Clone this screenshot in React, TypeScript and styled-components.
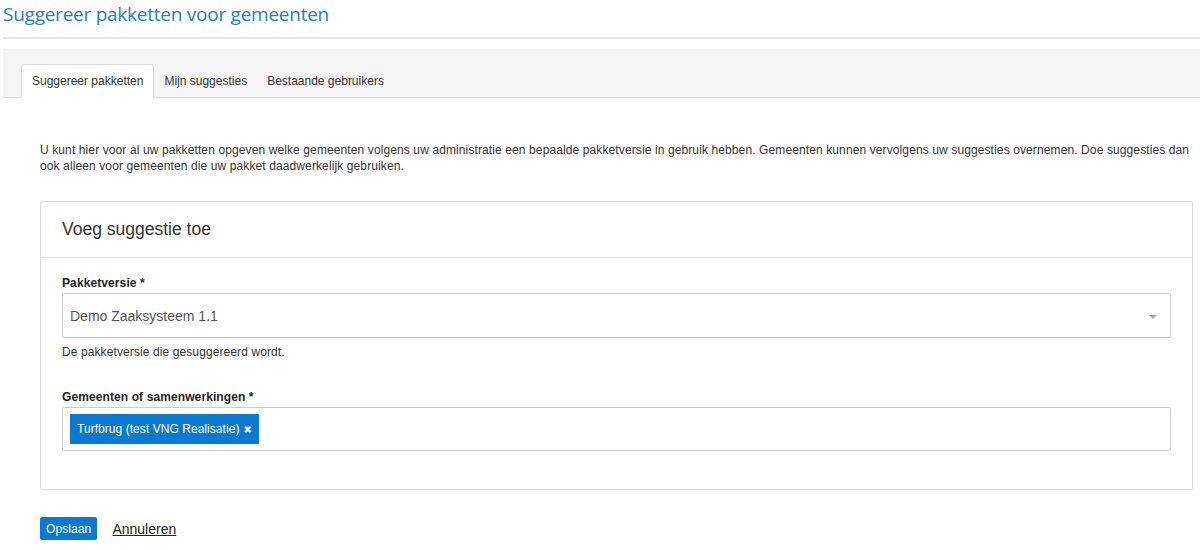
import styled, { createGlobalStyle } from "styled-components";

const GlobalStyle = createGlobalStyle`
  body {
    margin: 0;
    background: #ffffff;
    color: #333333;
    font-family: "Liberation Sans", Arial, sans-serif;
  }
`;

const Page = styled.div`
  width: 1200px;
  padding-left: 3px;
  box-sizing: border-box;
`;

const TitleBar = styled.div`
  border-bottom: 2px solid #e6e6e6;
  padding-bottom: 8px;
  margin-bottom: 10px;
`;

const Title = styled.h1`
  margin: 0;
  font-family: "Open Sans", "Liberation Sans", sans-serif;
  font-weight: 400;
  font-size: 19px;
  letter-spacing: -0.25px;
  line-height: 29px;
  color: #2a7fc4;
`;

const TabBar = styled.div`
  display: flex;
  align-items: flex-end;
  background: #f5f5f5;
  padding: 15px 0 0 18px;
  border-bottom: 1px solid #dddddd;
  height: 49px;
  box-sizing: border-box;
`;

const Tab = styled.div<{ $active?: boolean }>`
  height: 34px;
  box-sizing: border-box;
  display: flex;
  align-items: center;
  padding: ${(p) => (p.$active ? "0 10px 1px" : "0 9px 1px")};
  font-size: 12px;
  color: #333333;
  border: 1px solid ${(p) => (p.$active ? "#dddddd" : "transparent")};
  border-bottom: none;
  border-radius: 3px 3px 0 0;
  background: ${(p) => (p.$active ? "#ffffff" : "transparent")};
  margin-bottom: -1px;
`;

const Content = styled.div`
  padding: 44px 7px 0 37px;
`;

const Intro = styled.p`
  margin: 0 -7px 27px 0;
  font-size: 12px;
  letter-spacing: 0.11px;
  line-height: 16px;
  color: #333333;
`;

const Panel = styled.section`
  border: 1px solid #dddddd;
  border-radius: 2px;
`;

const PanelHeader = styled.div`
  height: 55px;
  display: flex;
  align-items: center;
  padding: 0 21px;
  border-bottom: 1px solid #e6e6e6;
  font-size: 17.5px;
  color: #333333;
`;

const PanelBody = styled.div`
  padding: 18px 21px 38px;
`;

const Field = styled.div`
  & + & {
    margin-top: 31px;
  }
`;

const Label = styled.label`
  display: block;
  font-size: 12px;
  letter-spacing: 0.1px;
  font-weight: 700;
  line-height: 14px;
  color: #222222;
  margin-bottom: 3px;
`;

const SelectBox = styled.div`
  height: 45px;
  box-sizing: border-box;
  border: 1px solid #cccccc;
  border-radius: 2px;
  display: flex;
  align-items: center;
  justify-content: space-between;
  padding: 0 13px 0 7px;
  font-size: 14px;
  color: #555555;
`;

const Caret = styled.span`
  width: 0;
  height: 0;
  border-left: 4px solid transparent;
  border-right: 4px solid transparent;
  border-top: 4px solid #aaaaaa;
  margin-top: 2px;
`;

const Help = styled.div`
  font-size: 12px;
  letter-spacing: 0.1px;
  line-height: 14px;
  color: #333333;
  margin-top: 7px;
`;

const MultiBox = styled.div`
  height: 44px;
  box-sizing: border-box;
  border: 1px solid #cccccc;
  border-radius: 2px;
  display: flex;
  align-items: center;
  padding: 0 7px;
`;

const Chip = styled.span`
  display: inline-flex;
  align-items: center;
  gap: 4px;
  height: 30px;
  padding: 0 7px;
  background: #0a7ad0;
  color: #ffffff;
  font-size: 12px;
  letter-spacing: 0.05px;
  border-radius: 1px;
`;

const ChipX = styled.span`
  font-family: "DejaVu Sans", sans-serif;
  font-size: 10px;
`;

const Actions = styled.div`
  display: flex;
  align-items: center;
  gap: 15px;
  margin-top: 27px;
`;

const PrimaryButton = styled.button`
  height: 23px;
  padding: 0 6px;
  border: none;
  border-radius: 2px;
  background: #0a7ad0;
  color: #ffffff;
  font-family: "Liberation Sans", Arial, sans-serif;
  font-size: 12px;
  letter-spacing: 0.1px;
`;

const LinkButton = styled.a`
  font-size: 14px;
  color: #222222;
  text-decoration: underline;
`;

export default function App() {
  return (
    <Page>
      <GlobalStyle />
      <TitleBar>
        <Title>Suggereer pakketten voor gemeenten</Title>
      </TitleBar>
      <TabBar>
        <Tab $active>Suggereer pakketten</Tab>
        <Tab>Mijn suggesties</Tab>
        <Tab>Bestaande gebruikers</Tab>
      </TabBar>
      <Content>
        <Intro>
          U kunt hier voor al uw pakketten opgeven welke gemeenten volgens uw administratie een bepaalde
          pakketversie in gebruik hebben. Gemeenten kunnen vervolgens uw suggesties overnemen. Doe suggesties dan
          ook alleen voor gemeenten die uw pakket daadwerkelijk gebruiken.
        </Intro>
        <Panel>
          <PanelHeader>Voeg suggestie toe</PanelHeader>
          <PanelBody>
            <Field>
              <Label>Pakketversie *</Label>
              <SelectBox>
                <span>Demo Zaaksysteem 1.1</span>
                <Caret />
              </SelectBox>
              <Help>De pakketversie die gesuggereerd wordt.</Help>
            </Field>
            <Field>
              <Label>Gemeenten of samenwerkingen *</Label>
              <MultiBox>
                <Chip>
                  Turfbrug (test VNG Realisatie) <ChipX>✖</ChipX>
                </Chip>
              </MultiBox>
            </Field>
          </PanelBody>
        </Panel>
        <Actions>
          <PrimaryButton>Opslaan</PrimaryButton>
          <LinkButton href="#">Annuleren</LinkButton>
        </Actions>
      </Content>
    </Page>
  );
}
